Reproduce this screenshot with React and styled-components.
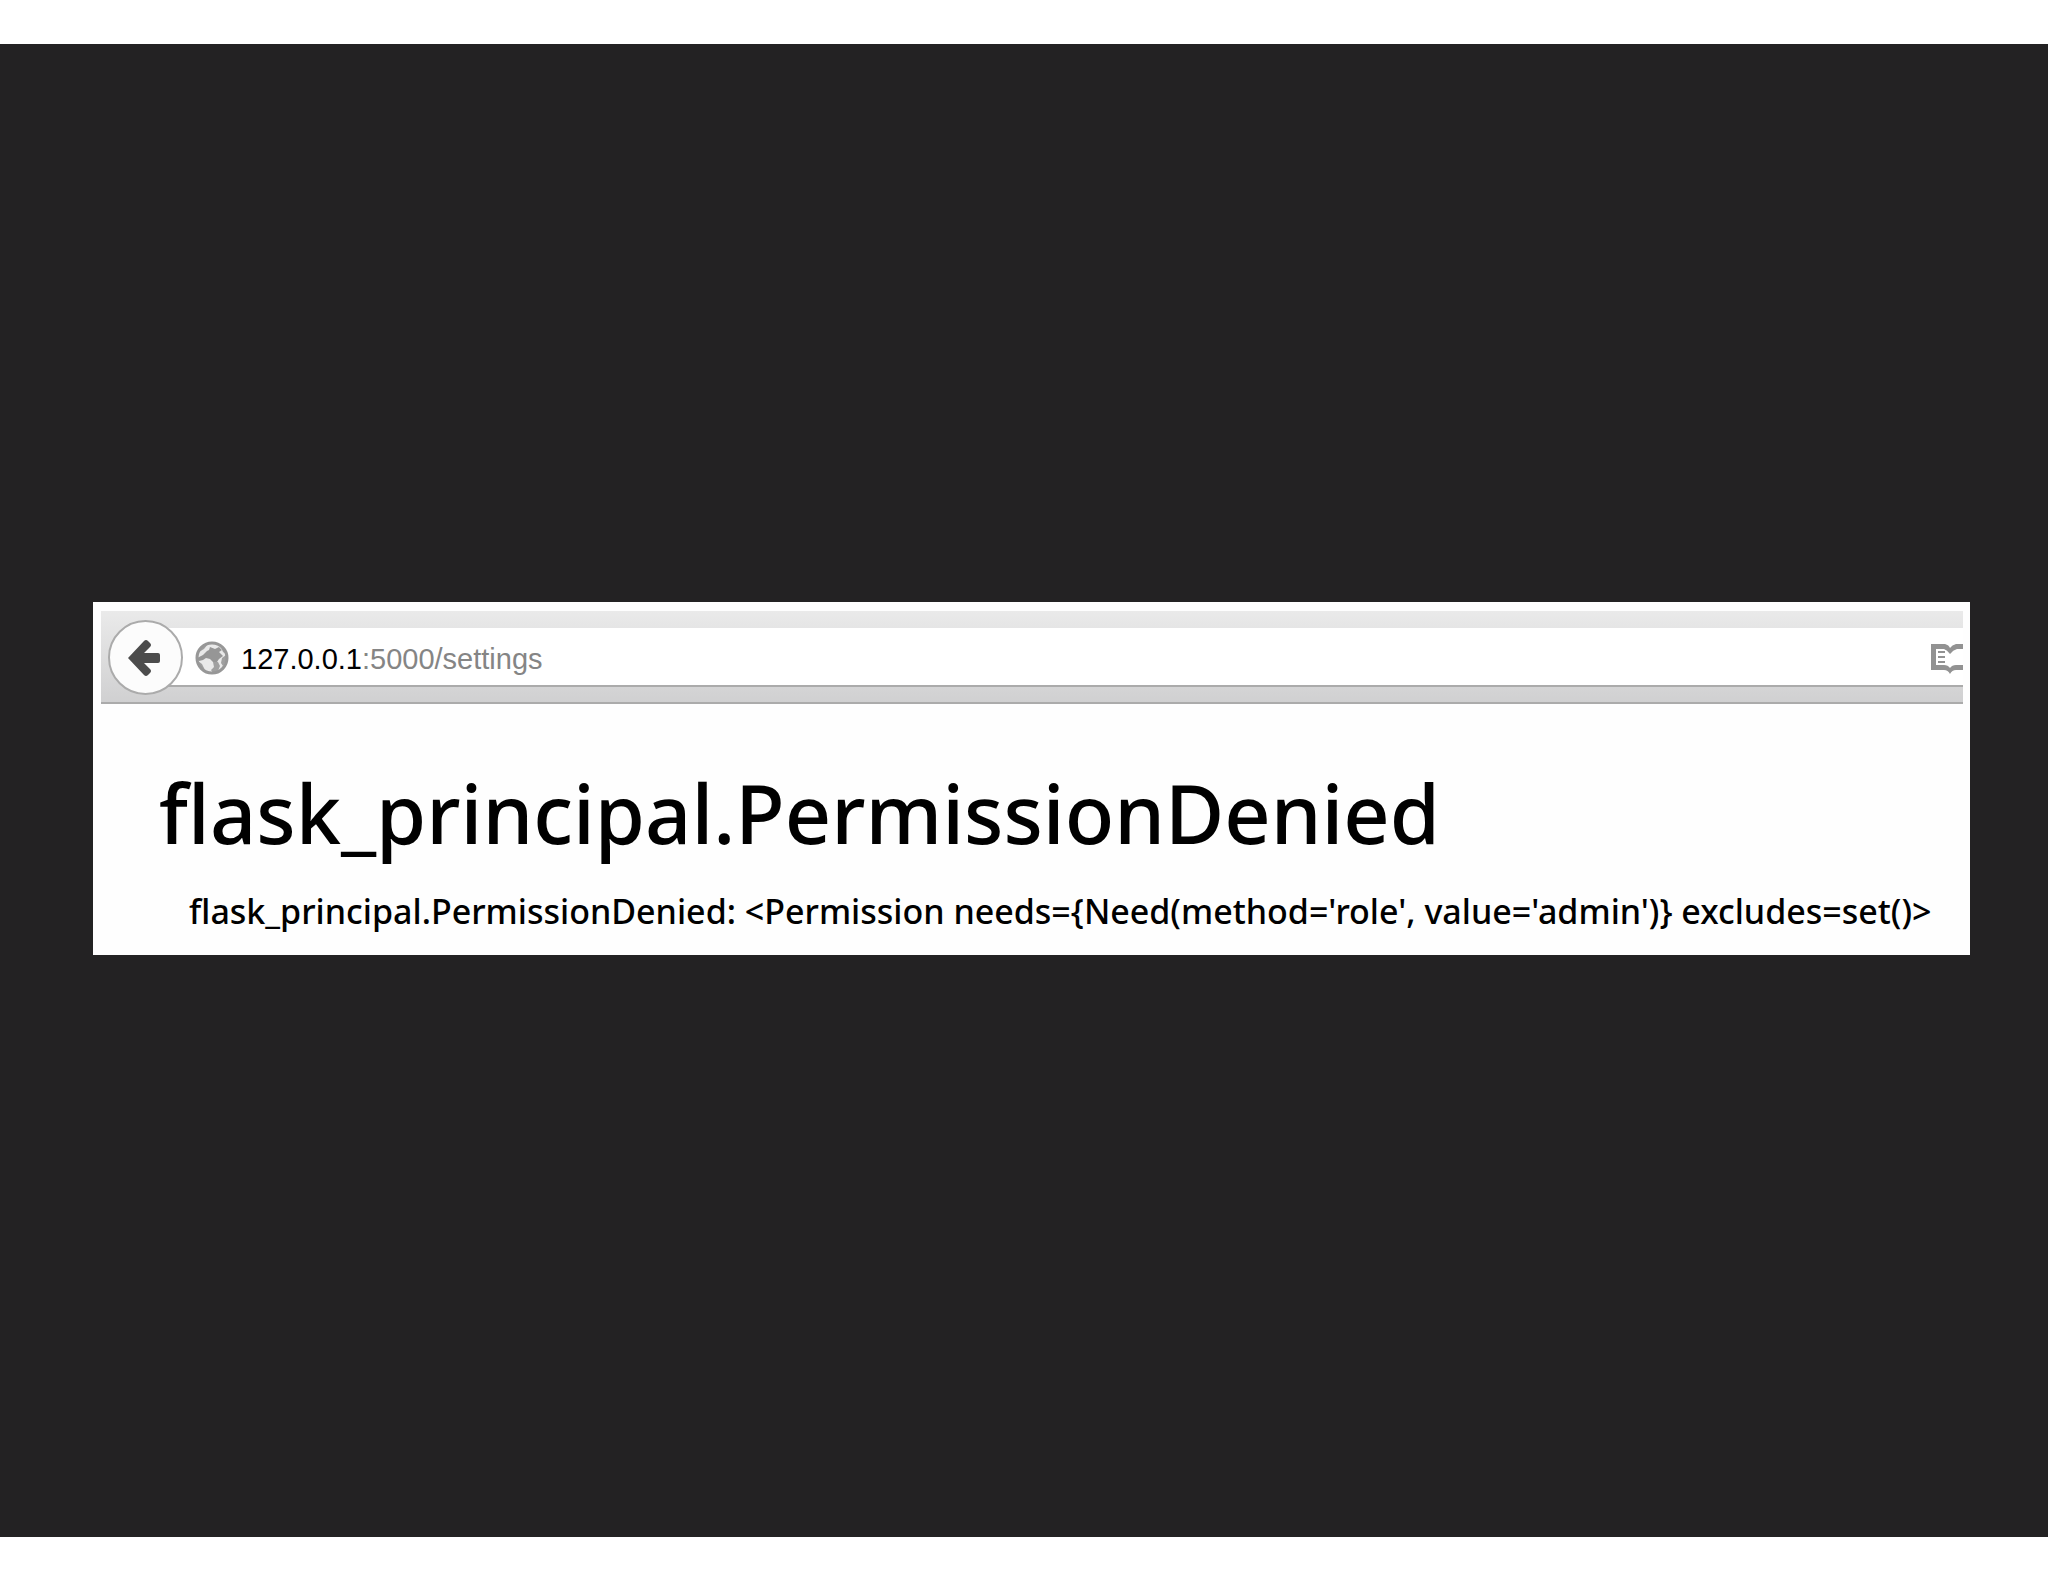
import React from 'react';
import styled, { createGlobalStyle } from 'styled-components';

const GlobalStyle = createGlobalStyle`
	* {
		box-sizing: border-box;
	}

	body {
		margin: 0;
		background: #fff;
	}
`;

const App = () => {
	return (
		<Page>
			<GlobalStyle />
			<Slide>
				<BrowserWindow>
					<Toolbar>
						<BackButton type="button" aria-label="Back">
							<BackArrow />
						</BackButton>
						<AddressBar>
							<Globe />
							<Address>
								<AddressPart
									aria-label="Host"
									defaultValue="127.0.0.1"
									$color="#000"
								/>
								<AddressPart
									aria-label="Port and path"
									defaultValue=":5000/settings"
									$color="#858585"
								/>
							</Address>
							<ReaderButton type="button" aria-label="Reader view">
								<Book />
							</ReaderButton>
						</AddressBar>
					</Toolbar>
					<ErrorPage>
						<ErrorTitle>flask_principal.PermissionDenied</ErrorTitle>
						<ErrorDetail>
							{
								"flask_principal.PermissionDenied: <Permission needs={Need(method='role', value='admin')} excludes=set()>"
							}
						</ErrorDetail>
					</ErrorPage>
				</BrowserWindow>
			</Slide>
		</Page>
	);
};

export default App;

const BackArrow = () => (
	<svg width="34" height="38" viewBox="0 0 34 38" aria-hidden="true">
		<path
			d="M1 19 L17 2 Q19 0 21 2 L23 4 Q25 6 23 8 L17 14 H31 Q33 14 33 16 V22 Q33 24 31 24 H17 L23 30 Q25 32 23 34 L21 36 Q19 38 17 36 Z"
			fill="#4c4c4c"
		/>
	</svg>
);

const Globe = () => (
	<svg width="34" height="34" viewBox="0 0 34 34" aria-hidden="true">
		<circle cx="17" cy="17" r="16" fill="#e9e9e9" />
		<path
			d="M2 17 L8 14 L12 10 L14 9 L15 6 L20 8 L24 6 L27 9 L24 11 L28 15 L24 18 L22 21 L18 21 L15 18 L11 17 L8 19 L4 20 L1 18 Z"
			fill="#969696"
		/>
		<path
			d="M18 21 L23 21 L25 25 L23 30 L18 32 L16 29 L19 26 Z M27 17 L31 14 L31 21 L28 25 L26 22 Z M3 20 L7 23 L10 29 L6 27 Z M25 4 L30 9 L31 13 L28 11 Z M4 11 L9 4 L13 3 L9 8 Z"
			fill="#a0a0a0"
		/>
		<circle cx="17" cy="17" r="15" fill="none" stroke="#979797" strokeWidth="3" />
	</svg>
);

// only the left page and the fold fit before the edge of the bar
const Book = () => (
	<svg width="32" height="32" viewBox="0 0 32 32" aria-hidden="true">
		<path
			d="M0 2 H14 Q18 3 19 6 Q21 3 25 2 H32 V7 H26 Q22 8 19 12 Q16 8 13 7 H5 V23 H13 Q17 23 19 26 Q21 23 25 23 H32 V28 H25 Q21 28 19 32 Q17 28 13 28 H0 Z"
			fill="#929292"
		/>
		<path d="M7 10 H14 M7 15 H14 M7 20 H14" stroke="#929292" strokeWidth="2" />
	</svg>
);

const Page = styled.div`
	display: flex;
	flex-direction: column;
	min-height: 100vh;
	padding: 44px 0 45px;
`;

const Slide = styled.main`
	flex: 1;
	display: flex;
	align-items: center;
	padding: 0 78px 24px 93px;
	background: #232223;
`;

const BrowserWindow = styled.section`
	flex: 1;
	min-width: 0;
	padding: 9px 7px 0 8px;
	background: #fefefe;
`;

const Toolbar = styled.header`
	display: flex;
	align-items: center;
	height: 93px;
	padding: 2px 0 0 7px;
	background: linear-gradient(#eaeaea, #d0d0d1);
	border-bottom: 2px solid #ababab;
`;

const BackButton = styled.button`
	z-index: 1;
	display: flex;
	align-items: center;
	justify-content: center;
	flex: none;
	width: 75px;
	height: 75px;
	padding: 0 4px 0 0;
	background: #fcfcfc;
	border: 2px solid #ababab;
	border-radius: 50%;
`;

const AddressBar = styled.div`
	flex: 1;
	display: flex;
	align-items: center;
	min-width: 0;
	height: 59px;
	margin-left: -24px;
	padding: 2px 0 0 36px;
	background: #fff;
	border-bottom: 2px solid #ababab;
`;

const Address = styled.div`
	flex: 1;
	display: flex;
	min-width: 0;
	padding: 2px 0 0 12px;
`;

const AddressPart = styled.input`
	field-sizing: content;
	padding: 0;
	color: ${({ $color }) => $color};
	background: none;
	border: 0;
	outline: 0;
	font-family: 'Liberation Sans', Arial, sans-serif;
	font-size: 29px;
	line-height: 36px;
`;

const ReaderButton = styled.button`
	display: flex;
	flex: none;
	padding: 0;
	background: none;
	border: 0;
`;

const ErrorPage = styled.article`
	padding: 53px 24px 20px 58px;
	color: #000;
	font-family: 'Noto Sans', 'Open Sans', sans-serif;
	font-weight: 500;
	white-space: nowrap;
`;

const ErrorTitle = styled.h1`
	margin: 0;
	font-size: 81px;
	font-weight: 500;
	line-height: 112px;
`;

const ErrorDetail = styled.p`
	margin: 18px 0 0;
	padding-left: 30px;
	font-size: 34px;
	line-height: 48px;
`;
